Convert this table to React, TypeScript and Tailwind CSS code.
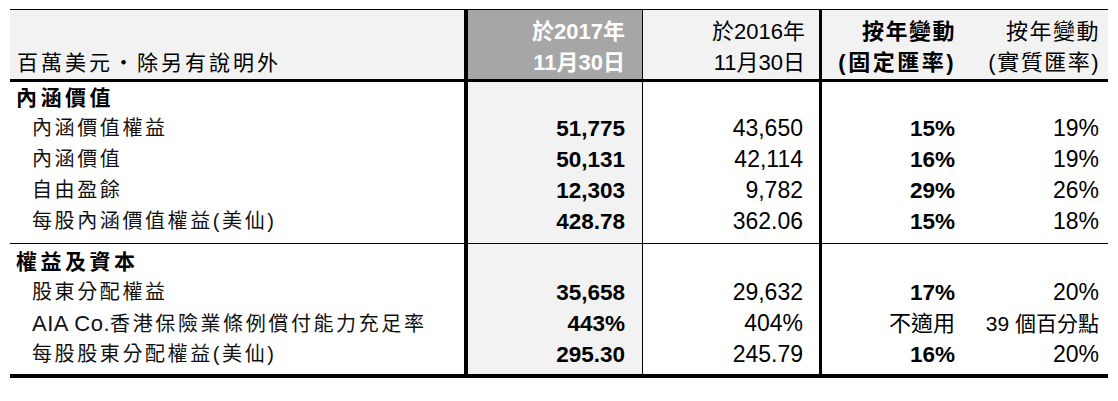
import React from 'react';

type Item = { label: React.ReactNode; key: string; cur: string; prev: string; fixed: string; real: string; fixedPlain?: boolean };

const sections: { title: string; items: Item[] }[] = [
  {
    title: '內涵價值',
    items: [
      { key: 'a', label: '內涵價值權益', cur: '51,775', prev: '43,650', fixed: '15%', real: '19%' },
      { key: 'b', label: '內涵價值', cur: '50,131', prev: '42,114', fixed: '16%', real: '19%' },
      { key: 'c', label: '自由盈餘', cur: '12,303', prev: '9,782', fixed: '29%', real: '26%' },
      { key: 'd', label: '每股內涵價值權益(美仙)', cur: '428.78', prev: '362.06', fixed: '15%', real: '18%' },
    ],
  },
  {
    title: '權益及資本',
    items: [
      { key: 'e', label: '股東分配權益', cur: '35,658', prev: '29,632', fixed: '17%', real: '20%' },
      {
        key: 'f',
        label: (
          <>
            <span className="text-[22px] tracking-[0.5px]">AIA Co.</span>香港保險業條例償付能力充足率
          </>
        ),
        cur: '443%',
        prev: '404%',
        fixed: '不適用',
        real: '39 個百分點',
        fixedPlain: true,
      },
      { key: 'g', label: '每股股東分配權益(美仙)', cur: '295.30', prev: '245.79', fixed: '16%', real: '20%' },
    ],
  },
];

const grid = 'grid grid-cols-[454px_178px_177px_146px_1fr]';
const c2 = 'border-l-4 border-black bg-[#f2f2f2] pr-[17px] text-right';
const c3 = 'border-l border-black pr-[16px] text-right';
const c4 = 'border-l-[3px] border-black pr-[10px] text-right';
const c5 = 'pr-[9px] text-right';

function Spacer({ h }: { h: string }) {
  return (
    <div className={`${grid} ${h}`}>
      <div />
      <div className={c2} />
      <div className={c3} />
      <div className={c4} />
      <div className={c5} />
    </div>
  );
}

export default function App() {
  return (
    <div className="min-h-screen bg-white pt-[9px] pl-[10px] text-black font-['Liberation_Sans','Noto_Sans_CJK_TC',sans-serif]">
      <div className="w-[1098px] border-t border-black">
        {/* header */}
        <div className={`${grid} h-[69px] bg-[#f2f2f2] leading-[31px]`}>
          <div className="flex items-end pl-[7px] pb-[1px] text-[21px] tracking-[3px]">百萬美元・除另有說明外</div>
          <div className="flex flex-col items-end justify-end border-l-4 border-black bg-[#a6a6a6] pr-[17px] pb-[1px] text-[22px] font-bold text-white">
            <span>於2017年</span>
            <span>11月30日</span>
          </div>
          <div className="flex flex-col items-end justify-end border-l border-black pr-[14px] pb-[1px] text-[22px]">
            <span>於2016年</span>
            <span>11月30日</span>
          </div>
          <div className="flex flex-col items-end justify-end border-l-[3px] border-black pr-[9px] pb-[1px] text-[22px] font-bold">
            <span className="tracking-[1.5px]">按年變動</span>
            <span className="tracking-[2.5px]">(固定匯率)</span>
          </div>
          <div className="flex flex-col items-end justify-end pr-[8px] pb-[1px] text-[22px]">
            <span className="tracking-[1.5px]">按年變動</span>
            <span className="tracking-[1.5px]">(實質匯率)</span>
          </div>
        </div>
        <div className="h-[3px] bg-black" />

        {sections.map((s, si) => (
          <div key={s.title} className={si === 0 ? 'border-b border-black' : 'border-b-4 border-black'}>
            {si === 1 && <Spacer h="h-[2px]" />}
            <div className={`${grid} h-[31px] leading-[31px]`}>
              <div className="pl-[6px] text-[21px] font-bold tracking-[3.5px]">{s.title}</div>
              <div className={c2} />
              <div className={c3} />
              <div className={c4} />
              <div className={c5} />
            </div>
            {s.items.map((it) => (
              <div key={it.key} className={`${grid} h-[31px] leading-[31px]`}>
                <div className="whitespace-nowrap pl-[22px] text-[20px] tracking-[2.6px] text-[#111]">{it.label}</div>
                <div className={`${c2} text-[22.5px] font-bold`}>{it.cur}</div>
                <div className={`${c3} text-[23px]`}>{it.prev}</div>
                <div className={`${c4} ${it.fixedPlain ? 'text-[22px]' : 'text-[22.5px] font-bold'}`}>{it.fixed}</div>
                <div className={`${c5} ${it.real.length > 4 ? 'text-[21px]' : 'text-[23px]'}`}>{it.real}</div>
              </div>
            ))}
            <Spacer h={si === 0 ? 'h-[6px]' : 'h-[4px]'} />
          </div>
        ))}
      </div>
    </div>
  );
}
